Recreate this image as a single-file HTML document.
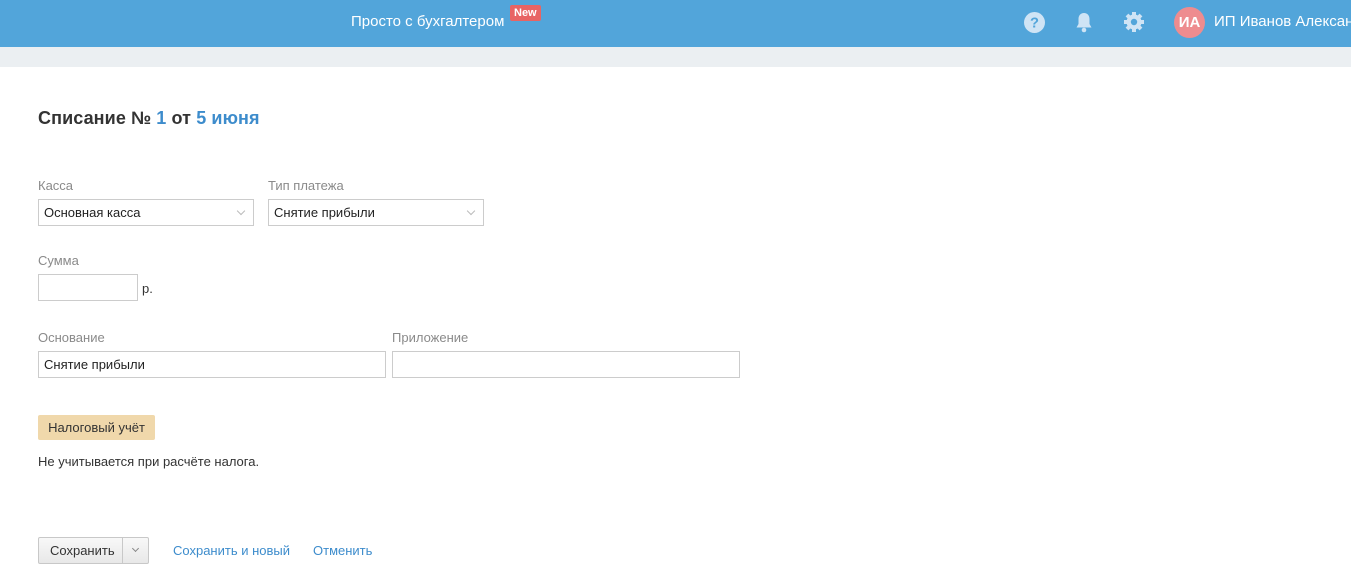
<!DOCTYPE html>
<html><head><meta charset="utf-8"><style>
*{box-sizing:border-box}
body{margin:0;width:1351px;height:572px;overflow:hidden;background:#fff;font-family:"Liberation Sans",Arial,sans-serif;color:#333}
.top{position:absolute;left:0;top:0;width:1351px;height:47px;background:#52a5da}
.sub{position:absolute;left:0;top:47px;width:1351px;height:20px;background:#ebeff2}
.abs{position:absolute}
.lbl{position:absolute;font-size:13px;color:#8a8a8a}
.inp{position:absolute;border:1px solid #ccc;height:27px;font-size:13px;color:#222;padding:5px 5px;background:#fff}
.chev{position:absolute;right:9px;top:8px;width:6px;height:6px;border-right:1px solid #bbb;border-bottom:1px solid #bbb;transform:rotate(45deg)}
</style></head><body>
<div class="top"></div>
<div class="sub"></div>
<div class="abs" style="left:351px;top:13px;font-size:15px;color:#fff">Просто с бухгалтером</div>
<div class="abs" style="left:510px;top:5px;background:#e86464;color:#fff;font-size:11px;font-weight:bold;padding:2px 4px;border-radius:2px">New</div>
<svg class="abs" style="left:1024px;top:12px" width="21" height="21" viewBox="0 0 20 20"><circle cx="10" cy="10" r="10" fill="#cfe4f5"/><text x="10" y="15" text-anchor="middle" font-family="Liberation Sans" font-weight="bold" font-size="14" fill="#52a5da">?</text></svg>
<svg class="abs" style="left:1075px;top:12px" width="18" height="21" viewBox="0 0 18 21"><path d="M9 1c-3.5 0-5.5 2.5-5.5 6v5L1.5 15.5h15L14.5 12V7C14.5 3.5 12.5 1 9 1z" fill="#cfe4f5"/><circle cx="9" cy="18" r="2.3" fill="#cfe4f5"/></svg>
<svg class="abs" style="left:1123px;top:11px" width="22" height="22" viewBox="0 0 22 22"><g fill="#cfe4f5"><circle cx="11" cy="11" r="7.5"/><g stroke="#cfe4f5" stroke-width="4"><line x1="11" y1="1" x2="11" y2="21"/><line x1="1" y1="11" x2="21" y2="11"/><line x1="4" y1="4" x2="18" y2="18"/><line x1="18" y1="4" x2="4" y2="18"/></g></g><circle cx="11" cy="11" r="3.2" fill="#52a5da"/></svg>
<div class="abs" style="left:1174px;top:7px;width:31px;height:31px;border-radius:50%;background:#ee8c8f;color:#fff;font-weight:bold;font-size:15px;text-align:center;line-height:31px">ИА</div>
<div class="abs" style="left:1214px;top:13px;font-size:15px;color:#fff;white-space:nowrap">ИП Иванов Александр</div>

<div class="abs" style="left:38px;top:108px;font-size:18px;font-weight:bold;color:#333;letter-spacing:0.1px">Списание № <span style="color:#3d8ccc">1</span> от <span style="color:#3d8ccc">5 июня</span></div>

<div class="lbl" style="left:38px;top:178px">Касса</div>
<div class="inp" style="left:38px;top:199px;width:216px">Основная касса<div class="chev"></div></div>
<div class="lbl" style="left:268px;top:178px">Тип платежа</div>
<div class="inp" style="left:268px;top:199px;width:216px">Снятие прибыли<div class="chev"></div></div>

<div class="lbl" style="left:38px;top:253px">Сумма</div>
<div class="inp" style="left:38px;top:274px;width:100px"></div>
<div class="abs" style="left:142px;top:281px;font-size:13px">р.</div>

<div class="lbl" style="left:38px;top:330px">Основание</div>
<div class="inp" style="left:38px;top:351px;width:348px">Снятие прибыли</div>
<div class="lbl" style="left:392px;top:330px">Приложение</div>
<div class="inp" style="left:392px;top:351px;width:348px"></div>

<div class="abs" style="left:38px;top:415px;width:117px;height:25px;background:#f0d8ab;border-radius:2px;font-size:13px;color:#333;line-height:25px;text-align:center">Налоговый учёт</div>
<div class="abs" style="left:38px;top:454px;font-size:13px;color:#333">Не учитывается при расчёте налога.</div>

<div class="abs" style="left:38px;top:537px;width:111px;height:27px;border:1px solid #c8c8c8;border-radius:2px;background:linear-gradient(#f8f8f8,#e8e8e8)"></div>
<div class="abs" style="left:122px;top:538px;width:1px;height:25px;background:#c8c8c8"></div>
<div class="abs" style="left:50px;top:543px;font-size:13px;color:#333">Сохранить</div>
<div class="abs" style="left:133px;top:546px;width:5px;height:5px;border-right:1px solid #888;border-bottom:1px solid #888;transform:rotate(45deg)"></div>
<div class="abs" style="left:173px;top:543px;font-size:13px;color:#3d8ccc">Сохранить и новый</div>
<div class="abs" style="left:313px;top:543px;font-size:13px;color:#3d8ccc">Отменить</div>
</body></html>
